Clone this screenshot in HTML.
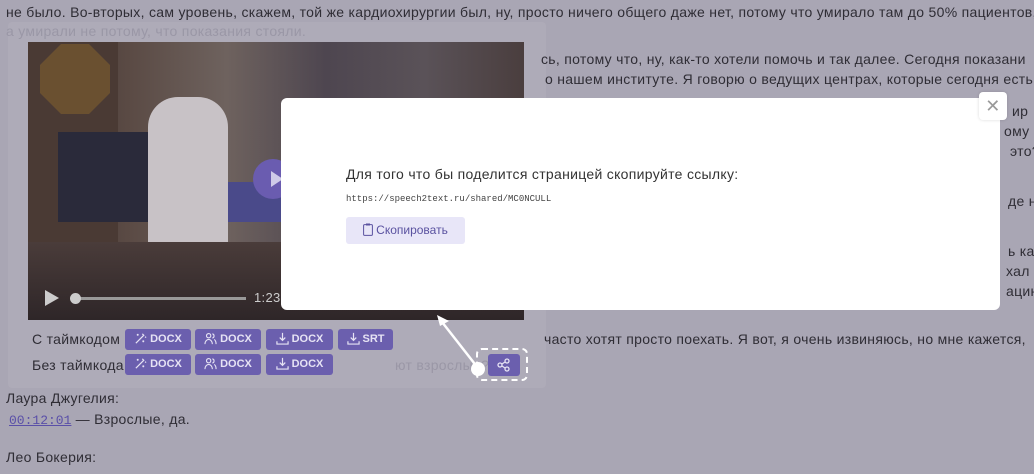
<!DOCTYPE html>
<html><head><meta charset="utf-8"><style>
body{margin:0;width:1034px;height:474px;overflow:hidden;background:#a9a6b4;font-family:"Liberation Sans",sans-serif;font-size:14px;letter-spacing:0.3px;color:#2f2d35;position:relative}
.t{position:absolute;white-space:nowrap}
.f{color:#9a97a6}
.panel{position:absolute;left:8px;top:22px;width:538px;height:366px;background:#aeabb8;border-radius:4px}
.video{position:absolute;left:28px;top:42px;width:496px;height:278px;background:linear-gradient(90deg,#3c3232 0%,#5a4a44 20%,#6e625e 40%,#4e4650 60%,#5a5258 80%,#4a3e3e 100%);overflow:hidden}
.btn{position:absolute;height:21px;background:#6b5fae;border-radius:3px;color:#e6e3f4;font-size:11px;font-weight:bold;line-height:21px;text-align:center;letter-spacing:0}
.btn svg{vertical-align:-3px;margin-right:3px}
.modal{position:absolute;left:281px;top:98px;width:719px;height:212px;background:#fff;border-radius:6px}
.close{position:absolute;left:979px;top:92px;width:28px;height:28px;background:#fff;border-radius:4px;box-shadow:0 0 3px rgba(0,0,0,.15);color:#999;text-align:center;line-height:28px;font-size:18px}
</style></head><body>
<div class="t" style="left:6px;top:4px">не было. Во-вторых, сам уровень, скажем, той же кардиохирургии был, ну, просто ничего общего даже нет, потому что умирало там до 50% пациентов,</div>
<div class="panel"></div>
<div class="t f" style="left:6px;top:23px">а умирали не потому, что показания стояли.</div>
<div class="t" style="left:541px;top:51px">сь, потому что, ну, как-то хотели помочь и так далее. Сегодня показани</div>
<div class="t" style="left:545px;top:71px">о нашем институте. Я говорю о ведущих центрах, которые сегодня есть.</div>
<div class="t" style="left:1012px;top:103px">ир</div>
<div class="t" style="left:1004px;top:123px">ому с</div>
<div class="t" style="left:1010px;top:143px">это?</div>
<div class="t" style="left:1008px;top:193px">де не</div>
<div class="t" style="left:1008px;top:243px">ь как</div>
<div class="t" style="left:1006px;top:263px">хал с</div>
<div class="t" style="left:1006px;top:283px">ацию</div>
<div class="t" style="left:544px;top:331px">часто хотят просто поехать. Я вот, я очень извиняюсь, но мне кажется,</div>
<div class="video">
 <div style="position:absolute;left:0;top:0;width:90px;height:278px;background:#4a3a34"></div>
 <div style="position:absolute;left:12px;top:2px;width:70px;height:70px;background:#6a5030;clip-path:polygon(30% 0,70% 0,100% 30%,100% 70%,70% 100%,30% 100%,0 70%,0 30%)"></div>
 <div style="position:absolute;left:120px;top:55px;width:80px;height:200px;background:#c8c2c6;border-radius:30px 30px 10px 10px"></div>
 <div style="position:absolute;left:30px;top:90px;width:90px;height:90px;background:#2a2a3a"></div>
 <div style="position:absolute;left:200px;top:140px;width:60px;height:40px;background:#4a4a8a"></div>
 <div style="position:absolute;left:0;top:200px;width:496px;height:78px;background:linear-gradient(#4a3c3a,#2e2628)"></div>
 <div style="position:absolute;left:225px;top:117px;width:40px;height:40px;border-radius:50%;background:#6a5cb0"></div>
 <div style="position:absolute;left:243px;top:129px;border-left:12px solid #cfcbe8;border-top:8px solid transparent;border-bottom:8px solid transparent"></div>
 <div style="position:absolute;left:17px;top:248px;border-left:14px solid #ccc;border-top:8px solid transparent;border-bottom:8px solid transparent"></div>
 <div style="position:absolute;left:48px;top:255px;width:170px;height:3px;background:#999"></div>
 <div style="position:absolute;left:42px;top:251px;width:11px;height:11px;border-radius:50%;background:#ccc"></div>
 <div class="t" style="left:226px;top:248px;color:#ccc;font-size:13px">1:23:</div>
</div>
<div class="t" style="left:32px;top:331px">С таймкодом</div>
<div class="t" style="left:32px;top:357px">Без таймкода</div>
<svg width="0" height="0" style="position:absolute"><defs>
<symbol id="w" viewBox="0 0 14 14"><path d="M2 12L11 3M9 2l1 1M12 5l1 1M4 2v2M3 3h2M10 9v2M9 10h2" stroke="#e6e3f4" stroke-width="1.3" fill="none"/></symbol>
<symbol id="u" viewBox="0 0 14 14"><g stroke="#e6e3f4" stroke-width="1.2" fill="none"><circle cx="5" cy="4" r="2.3"/><path d="M1 13c0-3 2-5 4-5s4 2 4 5M9 2a2.3 2.3 0 010 4.5M11 8c1.5 1 2 3 2 5"/></g></symbol>
<symbol id="d" viewBox="0 0 14 14"><path d="M7 1v8M4 6l3 3 3-3M1 10v3h12v-3" stroke="#e6e3f4" stroke-width="1.3" fill="none"/></symbol>
</defs></svg>
<div class="btn" style="left:125px;top:329px;width:66px"><svg width="13" height="13"><use href="#w"/></svg>DOCX</div>
<div class="btn" style="left:195px;top:329px;width:66px"><svg width="13" height="13"><use href="#u"/></svg>DOCX</div>
<div class="btn" style="left:266px;top:329px;width:67px"><svg width="13" height="13"><use href="#d"/></svg>DOCX</div>
<div class="btn" style="left:338px;top:329px;width:55px"><svg width="13" height="13"><use href="#d"/></svg>SRT</div>
<div class="btn" style="left:125px;top:354px;width:66px"><svg width="13" height="13"><use href="#w"/></svg>DOCX</div>
<div class="btn" style="left:195px;top:354px;width:66px"><svg width="13" height="13"><use href="#u"/></svg>DOCX</div>
<div class="btn" style="left:266px;top:354px;width:67px"><svg width="13" height="13"><use href="#d"/></svg>DOCX</div>
<div class="t f" style="left:395px;top:357px;color:#9a97a6">ют взрослые?</div>
<div style="position:absolute;left:476px;top:348px;width:48px;height:29px;border:2px dashed #fff;border-radius:6px"></div>
<div class="btn" style="left:488px;top:354px;width:32px;height:22px">
<svg width="14" height="14" viewBox="0 0 14 14" style="margin:4px 0 0 0" fill="none" stroke="#e6e3f4" stroke-width="1.3"><circle cx="10" cy="3" r="2"/><circle cx="3" cy="7" r="2"/><circle cx="10" cy="11" r="2"/><path d="M5 6l3-2M5 8l3 2"/></svg></div>
<svg style="position:absolute;left:0;top:0" width="1034" height="474"><line x1="478" y1="368" x2="442" y2="322" stroke="#fff" stroke-width="2.5"/><path d="M437 315l12 6-9 5z" fill="#fff"/><circle cx="478" cy="369" r="7" fill="#fff"/></svg>
<div class="t" style="left:6px;top:390px">Лаура Джугелия:</div>
<div class="t" style="left:9px;top:411px"><span style="font-family:'Liberation Mono',monospace;color:#5a4fa8;text-decoration:underline;font-size:13px;letter-spacing:0">00:12:01</span> — Взрослые, да.</div>
<div class="t" style="left:6px;top:449px">Лео Бокерия:</div>
<div class="modal">
 <div class="t" style="left:65px;top:68px;font-size:14px;color:#333">Для того что бы поделится страницей скопируйте ссылку:</div>
 <div class="t" style="left:65px;top:96px;font-family:'Liberation Mono',monospace;font-size:9px;color:#444;letter-spacing:0">https://speech2text.ru/shared/MC0NCULL</div>
 <div style="position:absolute;left:65px;top:119px;width:119px;height:27px;background:#e8e6f8;border-radius:3px;color:#5a52a0;font-size:12px;line-height:27px;text-align:center;letter-spacing:0"><svg width="10" height="13" viewBox="0 0 10 13" style="vertical-align:-2px;margin-right:3px"><rect x="0.6" y="1.6" width="8.8" height="10.8" rx="1" fill="none" stroke="#5a52a0"/><rect x="3" y="0.5" width="4" height="2" fill="#5a52a0"/></svg>Скопировать</div>
</div>
<div class="close">✕</div>
</body></html>
